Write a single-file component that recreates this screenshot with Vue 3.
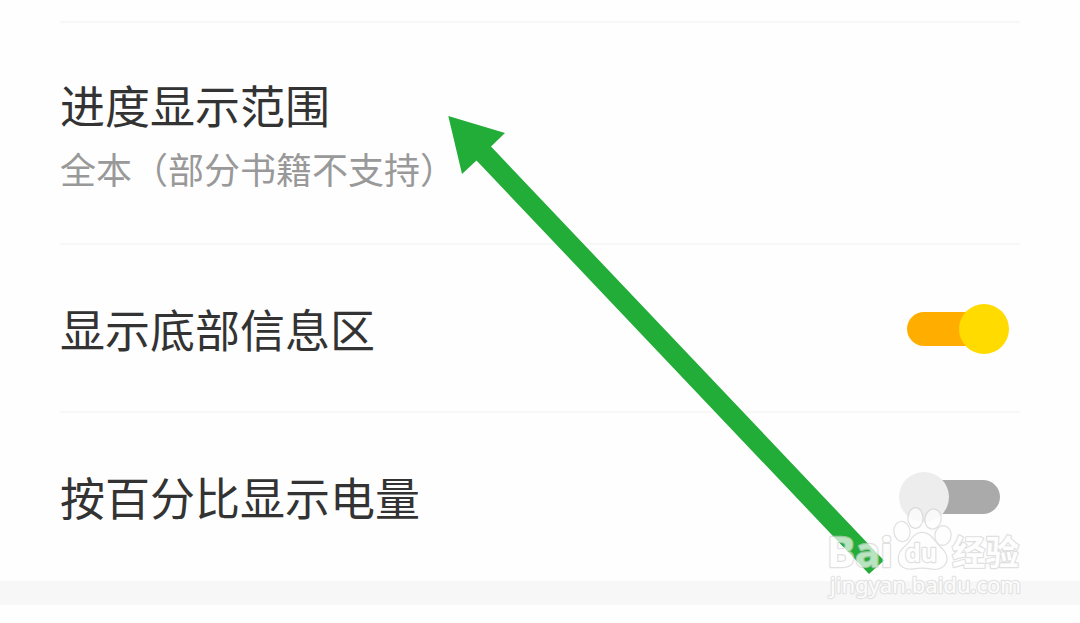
<script setup>
import { ref } from 'vue'

const rows = ref([
    { title: '进度显示范围', desc: '全本（部分书籍不支持）' },
    { title: '显示底部信息区', on: true },
    { title: '按百分比显示电量', on: false }
])

const toggle = (row) => {
    if (row.on !== undefined) row.on = !row.on
}
</script>

<template>
    <div class="page">
        <div class="list">
            <div v-for="row in rows" :key="row.title" class="row" :class="{ tall: row.desc }" @click="toggle(row)">
                <div class="info">
                    <div class="title">{{ row.title }}</div>
                    <div v-if="row.desc" class="desc">{{ row.desc }}</div>
                </div>
                <div v-if="row.on !== undefined" class="switch" :class="{ on: row.on }">
                    <div class="track"></div>
                    <div class="thumb"></div>
                </div>
            </div>
        </div>
        <div class="gap"></div>

        <svg class="overlay" width="1080" height="623" viewBox="0 0 1080 623">
            <polygon class="arrow" points="448.3,116 505,133 491,146.5 884,560.5 869,574 476.5,160.5 462,174" />
            <!-- watermark -->
            <g class="mark">
                <text class="logo" x="827" y="567" font-size="42" textLength="66" lengthAdjust="spacingAndGlyphs">Bai</text>
                <ellipse cx="902" cy="531.5" rx="7.5" ry="9.5" transform="rotate(-8 902 531.5)" />
                <ellipse cx="915.5" cy="518" rx="7" ry="9.7" />
                <ellipse cx="933" cy="519" rx="7.5" ry="9.5" transform="rotate(10 933 519)" />
                <ellipse cx="943" cy="535.5" rx="7.5" ry="9.2" transform="rotate(8 943 535.5)" />
                <path d="M922 533 C915 533 912 539 908 544 C903 549 898 552 899 560 C900 567 906 569 912 568.5 C919 567 925 567 932 568.5 C939 570 946 566 946.5 559 C946.5 552 941 549 937 544 C932 538 929 533 922 533 Z" />
                <text class="du" x="905" y="562" font-size="25" textLength="32" lengthAdjust="spacingAndGlyphs">du</text>
                <text class="cn" x="952" y="565" font-size="34" textLength="67" lengthAdjust="spacingAndGlyphs">经验</text>
                <text class="url" x="830" y="593" font-size="21" textLength="191" lengthAdjust="spacingAndGlyphs">jingyan.baidu.com</text>
            </g>
        </svg>
    </div>
</template>

<style>
body {
    margin: 0;
    background: #fefefe;
}
</style>

<style scoped>
.page {
    position: relative;
    width: 1080px;
    height: 623px;
    overflow: hidden;
    background: #fefefe;
    font-family: "Noto Sans CJK SC", sans-serif;
}

.list {
    padding: 21px 60px 0;
}

.row {
    display: flex;
    align-items: center;
    justify-content: space-between;
    box-sizing: border-box;
    height: 168px;
    padding-top: 2px;
    border-top: 2px solid #f7f7f7;
}

.row:last-child {
    height: 170px;
    padding-top: 0;
}

.row.tall {
    height: 222px;
    padding-top: 1px;
}

.title {
    font-size: 45px;
    line-height: 64px;
    color: #333;
}

.desc {
    font-size: 36px;
    line-height: 52px;
    margin-top: 5px;
    color: #999;
}

.switch {
    position: relative;
    width: 110px;
    height: 50px;
    margin-right: 11px;
}

.track {
    position: absolute;
    left: 9px;
    top: 8px;
    width: 92px;
    height: 34px;
    border-radius: 17px;
    background: #aaa;
}

.thumb {
    position: absolute;
    left: 0;
    top: 0;
    width: 50px;
    height: 50px;
    border-radius: 50%;
    background: #ededed;
}

.switch.on .track {
    left: 8px;
    background: #ffae00;
}

.switch.on .thumb {
    left: 60px;
    background: #ffdb00;
}

.gap {
    height: 24px;
    background: #f7f7f7;
}

.overlay {
    position: absolute;
    left: 0;
    top: 0;
    pointer-events: none;
}

.arrow {
    fill: #22ac38;
}

.mark {
    fill: #fff;
    stroke: #d2d2d2;
    stroke-width: 2.4;
    stroke-linejoin: round;
    paint-order: stroke;
    opacity: .68;
}

.logo,
.du {
    font-family: "Noto Sans", sans-serif;
    font-weight: bold;
}

.cn {
    font-weight: bold;
}

.url {
    font-family: "Noto Sans", sans-serif;
    stroke: #dadada;
}
</style>
